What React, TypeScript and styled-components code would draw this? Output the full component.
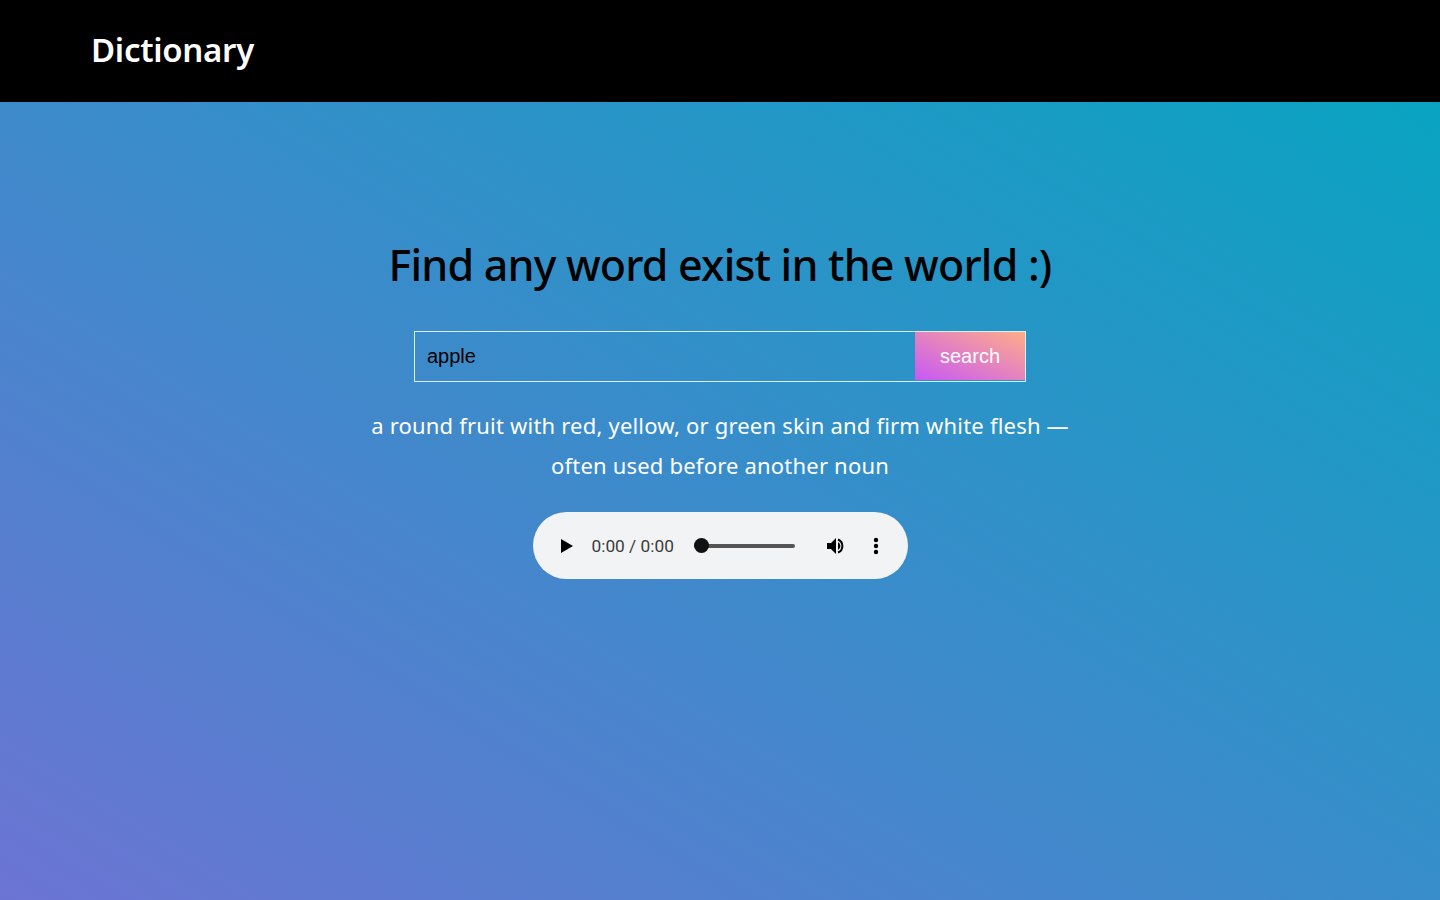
import React, { useState } from 'react';
import styled, { createGlobalStyle } from 'styled-components';

const GlobalStyle = createGlobalStyle`
  html, body {
    margin: 0;
    padding: 0;
    height: 100%;
  }
  body {
    font-family: 'Noto Sans', 'Open Sans', sans-serif;
  }
  * {
    box-sizing: border-box;
  }
`;

function App() {
  const [word, setWord] = useState('apple');

  return (
    <Page>
      <GlobalStyle />
      <Header>
        <Logo>Dictionary</Logo>
      </Header>
      <Main>
        <Title>Find any word exist in the world :)</Title>
        <SearchForm onSubmit={(e) => e.preventDefault()}>
          <SearchInput value={word} onChange={(e) => setWord(e.currentTarget.value)} />
          <SearchButton type='submit'>search</SearchButton>
        </SearchForm>
        <Definition>
          a round fruit with red, yellow, or green skin and firm white flesh — often used before
          another noun
        </Definition>
        <Player>
          <IconButton aria-label='play' $width={14}>
            <svg width='14' height='16' viewBox='0 0 14 16'>
              <path d='M1 1 L13 8 L1 15 Z' fill='#000' />
            </svg>
          </IconButton>
          <Time>0:00 / 0:00</Time>
          <Track>
            <Thumb />
          </Track>
          <IconButton aria-label='volume' $width={22} $gap={31}>
            <svg width='22' height='18' viewBox='0 0 22 18'>
              <path d='M1 6 H5 L10 1 V17 L5 12 H1 Z' fill='#000' />
              <path d='M12 2.5 A7 7 0 0 1 12 15.5' stroke='#000' strokeWidth='2' fill='none' />
              <path d='M12 5 A4.5 4.5 0 0 1 12 13 Z' fill='#000' />
            </svg>
          </IconButton>
          <IconButton aria-label='more' $width={6} $gap={25}>
            <svg width='6' height='18' viewBox='0 0 6 18'>
              <circle cx='3' cy='3' r='2.2' fill='#000' />
              <circle cx='3' cy='9' r='2.2' fill='#000' />
              <circle cx='3' cy='15' r='2.2' fill='#000' />
            </svg>
          </IconButton>
        </Player>
      </Main>
    </Page>
  );
}

export default App;

const Page = styled.div`
  width: 100vw;
  min-height: 100vh;
  display: flex;
  flex-direction: column;
  background: linear-gradient(to top right, #6c74d3, #03a6c0);
`;

const Header = styled.header`
  height: 102px;
  background-color: #000;
  display: flex;
  align-items: center;
  padding: 0 91px 4px;
`;

const Logo = styled.h1`
  margin: 0;
  color: #fff;
  font-size: 33px;
  font-weight: 600;
  letter-spacing: -0.3px;
`;

const Main = styled.main`
  display: flex;
  flex-direction: column;
  align-items: center;
  padding-top: 132px;
`;

const Title = styled.h2`
  margin: 0;
  color: #000;
  font-size: 43px;
  font-weight: 500;
  letter-spacing: -0.8px;
  line-height: 62px;
`;

const SearchForm = styled.form`
  display: flex;
  width: 612px;
  height: 51px;
  margin-top: 35px;
  border: 1px solid #d8eef5;
`;

const SearchInput = styled.input`
  flex: 1;
  border: none;
  outline: none;
  background: transparent;
  padding: 0 12px;
  font-family: 'Liberation Sans', Arial, sans-serif;
  font-size: 20px;
  color: #000;
`;

const SearchButton = styled.button`
  width: 110px;
  margin: 0 0 1px;
  border: none;
  background: linear-gradient(to top right, #c858f7, #ffad88);
  color: #fff;
  font-family: 'Liberation Sans', Arial, sans-serif;
  font-size: 20px;
  cursor: pointer;
`;

const Definition = styled.p`
  margin: 23px 0 0;
  max-width: 720px;
  text-align: center;
  color: #fff;
  font-size: 22px;
  letter-spacing: 0.2px;
  line-height: 40px;
`;

const Player = styled.div`
  margin-top: 27px;
  width: 375px;
  height: 67px;
  border-radius: 34px;
  background-color: #f1f3f4;
  display: flex;
  align-items: center;
  padding: 0 24px 0 27px;
`;

const IconButton = styled.span<{ $width: number; $gap?: number }>`
  display: flex;
  align-items: center;
  justify-content: center;
  width: ${(p) => p.$width}px;
  height: 18px;
  margin-left: ${(p) => p.$gap ?? 0}px;
  cursor: pointer;
`;

const Time = styled.span`
  margin-left: 18px;
  font-family: Roboto, 'Liberation Sans', sans-serif;
  font-size: 17.3px;
  color: #3c3c3c;
  white-space: nowrap;
`;

const Track = styled.div`
  position: relative;
  margin-left: 20px;
  width: 101px;
  height: 4px;
  border-radius: 2px;
  background-color: #555;
`;

const Thumb = styled.span`
  position: absolute;
  left: 0;
  top: 50%;
  width: 15px;
  height: 15px;
  margin-top: -7.5px;
  border-radius: 50%;
  background-color: #111;
`;
